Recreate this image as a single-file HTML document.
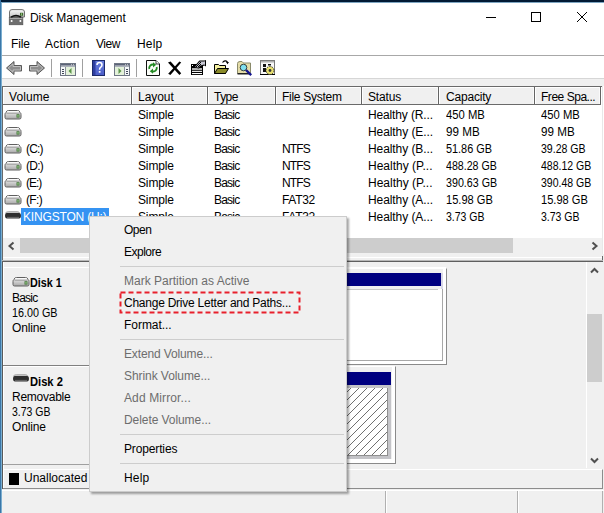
<!DOCTYPE html>
<html><head><meta charset="utf-8">
<style>
*{margin:0;padding:0;box-sizing:border-box}
html,body{width:604px;height:513px;overflow:hidden;background:#fff}
body{position:relative;font-family:"Liberation Sans",sans-serif;font-size:12px;color:#000}
.a{position:absolute}
.t{position:absolute;white-space:nowrap;line-height:14px}
.hd{position:absolute;top:-1px;height:17px;border-right:1px solid #646464;box-shadow:inset 1px 0 0 #fff,inset -1px 0 0 #fafafa}
.grey{color:#6d6d6d}
.mi{position:absolute;left:124px;white-space:nowrap;line-height:14px}
.sep{position:absolute;left:120px;width:224px;height:1px;background:#cdcdcd}
.tb{position:absolute;top:59px;width:1px;height:18px;background:#a0a0a0}
</style></head><body>
<svg width="0" height="0" style="position:absolute">
<defs>
<linearGradient id="gtop" x1="0" y1="0" x2="0" y2="1"><stop offset="0" stop-color="#e8e8e8"/><stop offset="1" stop-color="#bdbdbd"/></linearGradient>
<linearGradient id="gbody" x1="0" y1="0" x2="0" y2="1"><stop offset="0" stop-color="#f4f4f4"/><stop offset="1" stop-color="#a8a8a8"/></linearGradient>
<g id="hdd">
 <path d="M4.5 1.5 H13.5 Q15.5 1.5 16 3.5 Q17 4 17 5.5 V8.5 Q17 10 15.5 10 H2.5 Q1 10 1 8.5 V5.5 Q1 4 2 3.5 Q2.5 1.5 4.5 1.5 Z" fill="url(#gbody)" stroke="#606060" stroke-width="1"/>
 <path d="M2.5 4.2 H15.5" stroke="#8a8a8a" stroke-width="0.8"/>
 <path d="M3 2.6 H15" stroke="#fdfdfd" stroke-width="0.9"/>
 <rect x="12.5" y="5.2" width="3" height="3.4" fill="#4a7a40"/>
 <rect x="13.4" y="6.2" width="1.2" height="1.4" fill="#a8d898"/>
</g>
<g id="usb">
 <path d="M4.5 2.5 H13.5 Q15 2.5 15.5 4 L1.5 4 Q2.5 2.5 4.5 2.5Z" fill="#d8d8d8" stroke="#909090" stroke-width="0.6"/>
 <path d="M2.5 4 H15.5 Q17 4 17 6.5 Q17 9.5 15 9.5 H3 Q1 9.5 1 6.5 Q1 4 2.5 4 Z" fill="#2e2e2e"/>
 <path d="M3 8.4 H15" stroke="#6a6a6a" stroke-width="1"/>
</g>
</defs>
</svg>
<!-- window border -->
<div class="a" style="left:0;top:0;width:604px;height:2px;background:#021a34"></div>
<div class="a" style="left:0;top:2px;width:604px;height:1px;background:#7ea6c2"></div>
<div class="a" style="left:0;top:0;width:1px;height:513px;background:#3b77a8"></div>
<div class="a" style="left:1px;top:2px;width:1px;height:511px;background:#7aaed0"></div>

<!-- title icon -->
<svg class="a" style="left:8px;top:9px" width="18" height="17">
 <defs><linearGradient id="gti" x1="0" y1="0" x2="0" y2="1"><stop offset="0" stop-color="#fafafa"/><stop offset="1" stop-color="#c4c4c4"/></linearGradient></defs>
 <path d="M1.5 8 V3 Q1.5 0.6 4 0.6 H14 Q16.5 0.6 16.5 3 V8 Z" fill="url(#gti)" stroke="#707070"/>
 <rect x="12" y="3.8" width="3.2" height="3" fill="#3f6a30"/>
 <rect x="13.2" y="4.2" width="0.8" height="2.2" fill="#a8d090"/>
 <rect x="1.3" y="8.5" width="13.5" height="7.2" fill="#6e6e6e" stroke="#585858" stroke-width="0.8"/>
 <rect x="1.8" y="9" width="12.5" height="1" fill="#a8a8a8"/>
 <path d="M3 8.2 Q8 5 13 8.2" fill="none" stroke="#141414" stroke-width="1.6"/>
 <circle cx="3.6" cy="12" r="1" fill="#fff"/>
 <circle cx="12.4" cy="12" r="1" fill="#fff"/>
</svg>
<div class="t" style="left:30px;top:11px;letter-spacing:-0.07px">Disk Management</div>
<!-- window controls -->
<div class="a" style="left:486px;top:17px;width:10px;height:1px;background:#000"></div>
<div class="a" style="left:531px;top:12px;width:10px;height:10px;border:1px solid #000"></div>
<svg class="a" style="left:576px;top:11px" width="12" height="12"><path d="M1 1 L11 11 M11 1 L1 11" stroke="#000" stroke-width="1"/></svg>

<!-- menu -->
<div class="t" style="left:11px;top:37px;letter-spacing:-0.10px">File</div>
<div class="t" style="left:45px;top:37px;letter-spacing:0.20px">Action</div>
<div class="t" style="left:96px;top:37px;letter-spacing:-0.43px">View</div>
<div class="t" style="left:137px;top:37px;letter-spacing:0.17px">Help</div>
<div class="a" style="left:2px;top:55px;width:602px;height:1px;background:#a8a8a8"></div>

<!-- toolbar -->
<svg class="a" style="left:5px;top:60px" width="42" height="17">
 <path d="M1.5 8 L9 1.5 V5.5 H16.5 V11 H9 V14.5 Z" fill="#8e8e8e" stroke="#5a5a5a"/>
 <path d="M3.2 8 L8 3.8 V6.5 H15.5 V10 H8 V12.2 Z" fill="none" stroke="#c4c4c4" stroke-width="0.9"/>
 <path d="M39.5 8 L32 1.5 V5.5 H24.5 V11 H32 V14.5 Z" fill="#8e8e8e" stroke="#5a5a5a"/>
 <path d="M37.8 8 L33 3.8 V6.5 H25.5 V10 H33 V12.2 Z" fill="none" stroke="#c4c4c4" stroke-width="0.9"/>
</svg>
<div class="tb" style="left:51px"></div>
<svg class="a" style="left:60px;top:63px" width="17" height="14">
 <rect x="0.5" y="0.5" width="15" height="12" fill="#f6f8fa" stroke="#6f7684"/>
 <rect x="1" y="1" width="14" height="1.6" fill="#5c6478"/>
 <rect x="11" y="1.3" width="1" height="1" fill="#ddd"/><rect x="13" y="1.3" width="1" height="1" fill="#ddd"/>
 <rect x="1" y="3.2" width="14" height="0.8" fill="#9aa0ac"/>
 <rect x="5" y="4" width="1" height="8" fill="#8a909a"/>
 <rect x="6" y="4" width="9" height="8" fill="#e4f2da"/>
 <path d="M2 6h2v1h-2z M2 8h2v1h-2z M2 10h2v1h-2z" fill="#404858"/>
 <path d="M11.5 5 L8.5 8 L11.5 11z" fill="#5a9448"/>
</svg>
<div class="tb" style="left:82px"></div>
<svg class="a" style="left:92px;top:60px" width="14" height="16">
 <defs><linearGradient id="ghelp" x1="0" y1="0" x2="0" y2="1"><stop offset="0" stop-color="#6a80dc"/><stop offset="1" stop-color="#4a5cc8"/></linearGradient></defs>
 <rect x="0.5" y="0.5" width="12" height="15" fill="url(#ghelp)" stroke="#1c2a6a"/>
 <rect x="1" y="1" width="2.5" height="14" fill="#2e3ea0"/>
 <path d="M5 5 Q5 2.6 7.5 2.6 Q10 2.6 10 5 Q10 6.5 8.3 7.6 Q7.6 8.2 7.6 9.8" fill="none" stroke="#fff" stroke-width="1.5"/>
 <rect x="6.8" y="11" width="1.7" height="1.7" fill="#fff"/>
</svg>
<svg class="a" style="left:114px;top:63px" width="17" height="14">
 <rect x="0.5" y="0.5" width="15" height="12" fill="#f6f8fa" stroke="#6f7684"/>
 <rect x="1" y="1" width="14" height="1.6" fill="#5c6478"/>
 <rect x="11" y="1.3" width="1" height="1" fill="#ddd"/><rect x="13" y="1.3" width="1" height="1" fill="#ddd"/>
 <rect x="1" y="3.2" width="14" height="0.8" fill="#9aa0ac"/>
 <rect x="10" y="4" width="1" height="8" fill="#8a909a"/>
 <rect x="1" y="4" width="9" height="8" fill="#e4f2da"/>
 <path d="M12 6h2v1h-2z M12 8h2v1h-2z M12 10h2v1h-2z" fill="#404858"/>
 <path d="M4.5 5 L7.5 8 L4.5 11z" fill="#5a9448"/>
</svg>
<div class="tb" style="left:136px"></div>
<svg class="a" style="left:145px;top:60px" width="16" height="17">
 <path d="M1.5 0.5 H11 L14.5 4 V15.5 H1.5 Z" fill="#fbfdf8" stroke="#111"/>
 <path d="M11 0.5 V4 H14.5" fill="#fff" stroke="#111" stroke-width="0.8"/>
 <path d="M4.3 9 A3.6 3.6 0 0 1 8.5 4.6" fill="none" stroke="#238a23" stroke-width="1.8"/>
 <path d="M8 2.2 L11.2 4.8 L8 7.4z" fill="#238a23"/>
 <path d="M11.7 7 A3.6 3.6 0 0 1 7.5 11.4" fill="none" stroke="#238a23" stroke-width="1.8"/>
 <path d="M8 8.6 L4.8 11.2 L8 13.8z" fill="#238a23"/>
</svg>
<svg class="a" style="left:167px;top:61px" width="15" height="15">
 <path d="M1 1.5 L3.6 0.6 L14.2 12.2 L12.4 13.9 Z" fill="#000"/>
 <path d="M12.4 0.6 L14.2 1.4 L3.4 14 L1.2 12.8 Z" fill="#000"/>
</svg>
<svg class="a" style="left:188px;top:58px" width="20" height="18">
 <rect x="3" y="6" width="12" height="11" fill="#000"/>
 <rect x="4" y="10.3" width="10" height="1.4" fill="#fff"/>
 <rect x="4" y="12.8" width="10" height="1.1" fill="#fff"/>
 <rect x="4" y="15" width="10" height="1.1" fill="#fff"/>
 <rect x="4" y="7" width="1" height="1" fill="#fff"/>
 <path d="M5.5 9.5 L10.5 3.5 L11.5 2.5 H16.5 L18 2 V8.5 L16.5 7.5 L13 8.5 L11 10.5 Z" fill="#000"/>
 <path d="M7 9 L11 4.5 L12 3.6 H16 L17 3.3 V7 L16 6.6 L12.5 7.4 L10.5 9.5 Z" fill="#c8c8d4"/>
 <path d="M8 8 h1v1h-1z M9 7 h1v1h-1z M10 6 h1v1h-1z M11 5 h1v1h-1z M10 8 h1v1h-1z M11 7 h1v1h-1z M12 6 h1v1h-1z M12 4 h1v1h-1z" fill="#000"/>
</svg>
<svg class="a" style="left:213px;top:59px" width="17" height="16">
 <path d="M1.5 5.5 H5.5 L6.5 6.5 H12.5 V14.5 H1.5 Z" fill="#f4f0a0" stroke="#000"/>
 <path d="M1.5 14.5 L4.5 9.5 H15.5 L12.5 14.5 Z" fill="#8a8a28" stroke="#000"/>
 <path d="M9.5 3.5 Q12 0.5 14.5 3" fill="none" stroke="#000" stroke-width="1.1"/>
 <path d="M13 3 L16 3 L14.5 5.2 Z" fill="#000"/>
</svg>
<svg class="a" style="left:237px;top:61px" width="16" height="16">
 <path d="M0.5 2.5 Q0.5 0.5 3 0.5 H5 L6.5 2 H13.5 V12.5 H0.5 Z" fill="#e4dca8" stroke="#8a8a6a"/>
 <rect x="0.5" y="12" width="13" height="1.5" fill="#222"/>
 <circle cx="6.5" cy="6.5" r="3.3" fill="#80e0f0" stroke="#1a1a1a" stroke-width="0.8"/>
 <path d="M9 9 L14.2 14.2" stroke="#141490" stroke-width="2.4"/>
</svg>
<svg class="a" style="left:260px;top:60px" width="17" height="16">
 <rect x="0.5" y="0.5" width="14" height="14" fill="#f8f8f8" stroke="#7a7a7a" stroke-width="1"/>
 <rect x="1" y="1" width="13" height="1.5" fill="#b0b0b0"/>
 <rect x="0" y="14" width="15" height="1" fill="#000"/>
 <path d="M3 4h3v3h-3z M8 4h3v1.5h-3z M3 8h3v4h-3z" fill="#111"/>
 <circle cx="10" cy="10.5" r="4" fill="#e8e070" stroke="#222" stroke-width="0.9" stroke-dasharray="1.5 1"/>
 <circle cx="10" cy="10.5" r="1.4" fill="#333"/>
</svg>

<!-- toolbar bottom grey -->
<div class="a" style="left:2px;top:78px;width:602px;height:8px;background:#f0f0f0;border-top:1px solid #d6d6d6"></div>

<!-- list area -->
<div class="a" style="left:2px;top:86px;width:601px;height:176px;background:#fff;border-left:1px solid #6a6a6a;border-top:1px solid #6a6a6a"></div>
<div class="a" style="left:3px;top:87px;width:598px;height:18px;background:#f0f0f0;border-top:1px solid #fff;border-bottom:1px solid #6a6a6a">
  <div class="hd" style="left:0;width:129px"></div>
  <div class="hd" style="left:129px;width:76px"></div>
  <div class="hd" style="left:205px;width:68px"></div>
  <div class="hd" style="left:273px;width:86px"></div>
  <div class="hd" style="left:359px;width:77px"></div>
  <div class="hd" style="left:436px;width:96px"></div>
  <div class="hd" style="left:532px;width:66px"></div>
</div>
<div class="t" style="left:9px;top:90px;letter-spacing:0.08px">Volume</div>
<div class="t" style="left:138px;top:90px;letter-spacing:-0.04px">Layout</div>
<div class="t" style="left:214px;top:90px;letter-spacing:-0.53px">Type</div>
<div class="t" style="left:282px;top:90px;letter-spacing:-0.28px">File System</div>
<div class="t" style="left:368px;top:90px;letter-spacing:-0.14px">Status</div>
<div class="t" style="left:446px;top:90px;letter-spacing:-0.20px">Capacity</div>
<div class="t" style="left:541px;top:90px;letter-spacing:-0.47px">Free Spa...</div>
<svg class="a" style="left:4px;top:109px" width="18" height="11"><use href="#hdd"/></svg>
<div class="t" style="left:138px;top:108px;letter-spacing:-0.14px">Simple</div>
<div class="t" style="left:214px;top:108px;letter-spacing:-0.78px">Basic</div>
<div class="t" style="left:368px;top:108px;letter-spacing:-0.14px">Healthy (R...</div>
<div class="t" style="left:446px;top:108px;transform:scaleX(0.939);transform-origin:0 0">450 MB</div>
<div class="t" style="left:541px;top:108px;transform:scaleX(0.939);transform-origin:0 0">450 MB</div>
<svg class="a" style="left:4px;top:126px" width="18" height="11"><use href="#hdd"/></svg>
<div class="t" style="left:138px;top:125px;letter-spacing:-0.14px">Simple</div>
<div class="t" style="left:214px;top:125px;letter-spacing:-0.78px">Basic</div>
<div class="t" style="left:368px;top:125px;letter-spacing:-0.08px">Healthy (E...</div>
<div class="t" style="left:446px;top:125px;transform:scaleX(0.971);transform-origin:0 0">99 MB</div>
<div class="t" style="left:541px;top:125px;transform:scaleX(0.971);transform-origin:0 0">99 MB</div>
<svg class="a" style="left:4px;top:143px" width="18" height="11"><use href="#hdd"/></svg>
<div class="t" style="left:26px;top:142px;letter-spacing:-0.83px">(C:)</div>
<div class="t" style="left:138px;top:142px;letter-spacing:-0.14px">Simple</div>
<div class="t" style="left:214px;top:142px;letter-spacing:-0.78px">Basic</div>
<div class="t" style="left:282px;top:142px;letter-spacing:-0.83px">NTFS</div>
<div class="t" style="left:368px;top:142px;letter-spacing:-0.08px">Healthy (B...</div>
<div class="t" style="left:446px;top:142px;transform:scaleX(0.906);transform-origin:0 0">51.86 GB</div>
<div class="t" style="left:541px;top:142px;transform:scaleX(0.880);transform-origin:0 0">39.28 GB</div>
<svg class="a" style="left:4px;top:160px" width="18" height="11"><use href="#hdd"/></svg>
<div class="t" style="left:26px;top:159px;letter-spacing:-0.73px">(D:)</div>
<div class="t" style="left:138px;top:159px;letter-spacing:-0.14px">Simple</div>
<div class="t" style="left:214px;top:159px;letter-spacing:-0.78px">Basic</div>
<div class="t" style="left:282px;top:159px;letter-spacing:-0.83px">NTFS</div>
<div class="t" style="left:368px;top:159px;letter-spacing:0.00px">Healthy (P...</div>
<div class="t" style="left:446px;top:159px;transform:scaleX(0.886);transform-origin:0 0">488.28 GB</div>
<div class="t" style="left:541px;top:159px;transform:scaleX(0.877);transform-origin:0 0">488.12 GB</div>
<svg class="a" style="left:4px;top:177px" width="18" height="11"><use href="#hdd"/></svg>
<div class="t" style="left:26px;top:176px;letter-spacing:-1.00px">(E:)</div>
<div class="t" style="left:138px;top:176px;letter-spacing:-0.14px">Simple</div>
<div class="t" style="left:214px;top:176px;letter-spacing:-0.78px">Basic</div>
<div class="t" style="left:282px;top:176px;letter-spacing:-0.83px">NTFS</div>
<div class="t" style="left:368px;top:176px;letter-spacing:0.00px">Healthy (P...</div>
<div class="t" style="left:446px;top:176px;transform:scaleX(0.891);transform-origin:0 0">390.63 GB</div>
<div class="t" style="left:541px;top:176px;transform:scaleX(0.877);transform-origin:0 0">390.48 GB</div>
<svg class="a" style="left:4px;top:194px" width="18" height="11"><use href="#hdd"/></svg>
<div class="t" style="left:26px;top:193px;letter-spacing:-0.67px">(F:)</div>
<div class="t" style="left:138px;top:193px;letter-spacing:-0.14px">Simple</div>
<div class="t" style="left:214px;top:193px;letter-spacing:-0.78px">Basic</div>
<div class="t" style="left:282px;top:193px;letter-spacing:-0.30px">FAT32</div>
<div class="t" style="left:368px;top:193px;letter-spacing:-0.08px">Healthy (A...</div>
<div class="t" style="left:446px;top:193px;transform:scaleX(0.924);transform-origin:0 0">15.98 GB</div>
<div class="t" style="left:541px;top:193px;transform:scaleX(0.924);transform-origin:0 0">15.98 GB</div>
<svg class="a" style="left:4px;top:209px" width="18" height="11"><use href="#usb"/></svg>
<div class="a" style="left:21px;top:208px;width:88px;height:17px;background:#3593f2"></div>
<div class="t" style="left:23px;top:210px;color:#fff;letter-spacing:-0.17px">KINGSTON (H:)</div>
<div class="t" style="left:138px;top:210px;letter-spacing:-0.14px">Simple</div>
<div class="t" style="left:214px;top:210px;letter-spacing:-0.78px">Basic</div>
<div class="t" style="left:282px;top:210px;letter-spacing:-0.30px">FAT32</div>
<div class="t" style="left:368px;top:210px;letter-spacing:-0.08px">Healthy (A...</div>
<div class="t" style="left:446px;top:210px;transform:scaleX(0.875);transform-origin:0 0">3.73 GB</div>
<div class="t" style="left:541px;top:210px;transform:scaleX(0.875);transform-origin:0 0">3.73 GB</div>
<!-- h scrollbar -->
<div class="a" style="left:3px;top:238px;width:599px;height:16px;background:#f0f0f0"></div>
<div class="a" style="left:20px;top:238px;width:493px;height:15px;background:#cdcdcd"></div>
<svg class="a" style="left:7px;top:241px" width="9" height="10"><path d="M6.5 1.5 L2.5 5 L6.5 8.5" fill="none" stroke="#505050" stroke-width="2"/></svg>
<svg class="a" style="left:590px;top:241px" width="9" height="10"><path d="M2.5 1.5 L6.5 5 L2.5 8.5" fill="none" stroke="#505050" stroke-width="2"/></svg>
<div class="a" style="left:602px;top:86px;width:1px;height:168px;background:#e8e8e8"></div>

<!-- splitter -->
<div class="a" style="left:3px;top:254px;width:601px;height:8px;background:#f0f0f0"></div>
<div class="a" style="left:3px;top:257px;width:599px;height:1px;background:#fff"></div>
<div class="a" style="left:602px;top:256px;width:1px;height:6px;background:#6a6a6a"></div>
<div class="a" style="left:2px;top:261px;width:601px;height:1px;background:#5f5f5f"></div>
<div class="a" style="left:2px;top:260px;width:601px;height:1px;background:#b8b8b8"></div>

<!-- lower pane -->
<div class="a" style="left:2px;top:262px;width:602px;height:251px;background:#f0f0f0"></div>
<div class="a" style="left:2px;top:262px;width:1px;height:227px;background:#5a5a5a"></div>
<div class="a" style="left:3px;top:262px;width:1px;height:226px;background:#fff"></div>
<div class="a" style="left:3px;top:267px;width:443px;height:1px;background:#fff"></div>
<!-- disk info boxes -->
<div class="a" style="left:3px;top:365px;width:87px;height:1px;background:#808080"></div>
<div class="a" style="left:3px;top:366px;width:87px;height:1px;background:#fff"></div>
<div class="a" style="left:3px;top:464px;width:87px;height:1px;background:#a0a0a0"></div>
<svg class="a" style="left:12px;top:276px" width="18" height="11"><use href="#hdd"/></svg>
<div class="t" style="left:30px;top:276px;font-weight:bold;transform:scaleX(0.9);transform-origin:0 0">Disk 1</div>
<div class="t" style="left:12px;top:291px;letter-spacing:-0.78px">Basic</div>
<div class="t" style="left:12px;top:306px;transform:scaleX(0.898);transform-origin:0 0">16.00 GB</div>
<div class="t" style="left:12px;top:321px;letter-spacing:-0.14px">Online</div>
<svg class="a" style="left:12px;top:372px" width="18" height="11"><use href="#usb"/></svg>
<div class="t" style="left:30px;top:375px;font-weight:bold;transform:scaleX(0.93);transform-origin:0 0">Disk 2</div>
<div class="t" style="left:12px;top:390px;letter-spacing:-0.25px">Removable</div>
<div class="t" style="left:12px;top:405px;transform:scaleX(0.875);transform-origin:0 0">3.73 GB</div>
<div class="t" style="left:12px;top:420px;letter-spacing:-0.14px">Online</div>

<!-- disk 1 volume graphic -->
<div class="a" style="left:95px;top:268px;width:352px;height:97px;border-top:1px solid #fff;border-right:1px solid #8a8a8a;border-bottom:1px solid #8a8a8a"></div>
<div class="a" style="left:95px;top:289px;width:348px;height:72px;background:#fff;border-right:1px solid #a8a8a8;border-bottom:1px solid #a8a8a8"></div>
<div class="a" style="left:95px;top:289px;width:343px;height:1px;background:#c8c8c8"></div>
<div class="a" style="left:443px;top:269px;width:3px;height:95px;background:#fff"></div>
<div class="a" style="left:95px;top:361px;width:351px;height:3px;background:#fff"></div>
<div class="a" style="left:95px;top:273px;width:347px;height:13px;background:#000080"></div>
<div class="a" style="left:441px;top:273px;width:2px;height:16px;background:#d8d8e8"></div>
<!-- disk 2 volume graphic -->
<div class="a" style="left:95px;top:366px;width:301px;height:98px;border-top:1px solid #fff;border-right:1px solid #8a8a8a;border-bottom:1px solid #8a8a8a"></div>
<div class="a" style="left:392px;top:367px;width:3px;height:96px;background:#fff"></div>
<div class="a" style="left:95px;top:459px;width:300px;height:4px;background:#fff"></div>
<div class="a" style="left:95px;top:372px;width:296px;height:13px;background:#000080"></div>
<div class="a" style="left:95px;top:385px;width:296px;height:74px;background:#c4c4c8"></div>
<svg class="a" style="left:95px;top:388px" width="293" height="68">
 <defs><pattern id="hatch" width="8" height="8" patternUnits="userSpaceOnUse"><rect width="8" height="8" fill="#fff"/><path d="M0 7h1v1h-1z M1 6h1v1h-1z M2 5h1v1h-1z M3 4h1v1h-1z M4 3h1v1h-1z M5 2h1v1h-1z M6 1h1v1h-1z M7 0h1v1h-1z" fill="#707070"/></pattern></defs>
 <rect width="293" height="68" fill="url(#hatch)"/>
 <path d="M0 67.5 H292.5 V0" fill="none" stroke="#909090"/>
</svg>

<!-- v scrollbar -->
<div class="a" style="left:586px;top:262px;width:1px;height:206px;background:#fff"></div>
<div class="a" style="left:587px;top:262px;width:15px;height:206px;background:#f0f0f0"></div>
<div class="a" style="left:587px;top:314px;width:15px;height:68px;background:#cdcdcd"></div>
<svg class="a" style="left:589px;top:266px" width="11" height="9"><path d="M2 6.5 L5.5 3 L9 6.5" fill="none" stroke="#505050" stroke-width="2"/></svg>
<svg class="a" style="left:589px;top:456px" width="11" height="9"><path d="M2 2.5 L5.5 6 L9 2.5" fill="none" stroke="#505050" stroke-width="2"/></svg>

<!-- legend -->
<div class="a" style="left:3px;top:469px;width:600px;height:20px;border-top:1px solid #fff;border-right:1px solid #8c8c8c;border-bottom:1px solid #8c8c8c"></div>
<div class="a" style="left:9px;top:473px;width:10px;height:12px;background:#000"></div>
<div class="t" style="left:24px;top:471px;letter-spacing:0.00px">Unallocated</div>
<!-- status bar -->
<div class="a" style="left:2px;top:490px;width:602px;height:1px;background:#fff"></div>
<div class="a" style="left:385px;top:491px;width:1px;height:22px;background:#b0b0b0"></div>
<div class="a" style="left:386px;top:491px;width:1px;height:22px;background:#fff"></div>
<div class="a" style="left:517px;top:491px;width:1px;height:22px;background:#b0b0b0"></div>
<div class="a" style="left:518px;top:491px;width:1px;height:22px;background:#fff"></div>
<div class="a" style="left:602px;top:491px;width:1px;height:22px;background:#b0b0b0"></div>

<!-- context menu -->
<div class="a" style="left:89px;top:216px;width:258px;height:276px;background:#f0f0f0;border:1px solid #cccccc;box-shadow:2px 2px 2px rgba(0,0,0,0.35)"></div>
<div class="mi" style="top:223px;letter-spacing:-0.50px">Open</div>
<div class="mi" style="top:245px;letter-spacing:-0.50px">Explore</div>
<div class="sep" style="top:266px"></div>
<div class="mi grey" style="top:274px;letter-spacing:0.00px">Mark Partition as Active</div>
<div class="mi" style="top:296px;letter-spacing:-0.24px">Change Drive Letter and Paths...</div>
<svg class="a" style="left:118px;top:290px" width="185" height="26"><rect x="2.5" y="2.5" width="179" height="20" fill="none" stroke="#e8202c" stroke-width="2" stroke-dasharray="5 3"/></svg>
<div class="mi" style="top:318px;letter-spacing:-0.04px">Format...</div>
<div class="sep" style="top:339px"></div>
<div class="mi grey" style="top:347px;letter-spacing:-0.13px">Extend Volume...</div>
<div class="mi grey" style="top:369px;letter-spacing:-0.07px">Shrink Volume...</div>
<div class="mi grey" style="top:391px;letter-spacing:0.12px">Add Mirror...</div>
<div class="mi grey" style="top:413px;letter-spacing:-0.07px">Delete Volume...</div>
<div class="sep" style="top:434px"></div>
<div class="mi" style="top:442px;letter-spacing:-0.14px">Properties</div>
<div class="sep" style="top:463px"></div>
<div class="mi" style="top:471px;letter-spacing:0.17px">Help</div>
</body></html>
